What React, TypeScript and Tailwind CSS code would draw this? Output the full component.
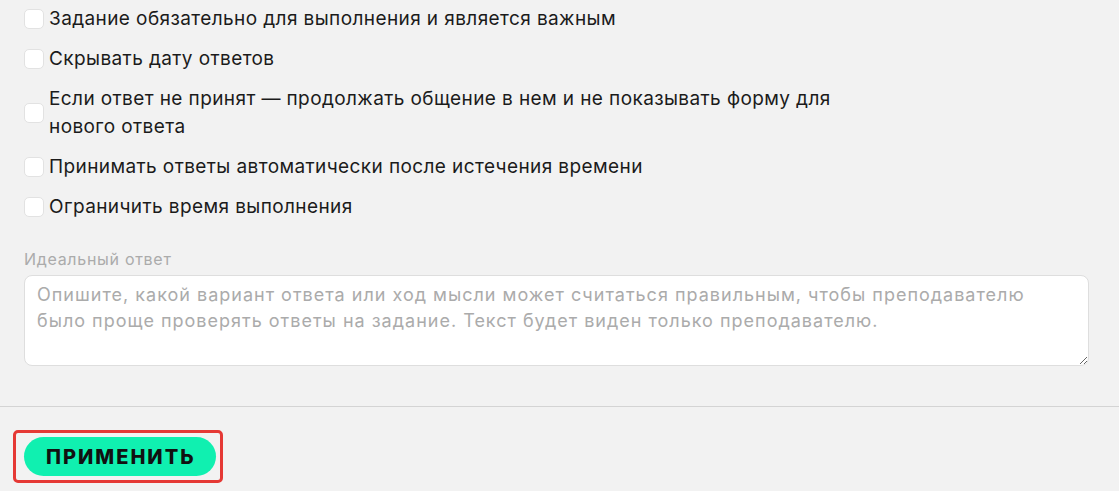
import { useState } from 'react';

type Option = { id: string; label: React.ReactNode };

const options: Option[] = [
  { id: 'required', label: 'Задание обязательно для выполнения и является важным' },
  { id: 'hide-date', label: 'Скрывать дату ответов' },
  {
    id: 'continue',
    label: (
      <>
        Если ответ не принят — продолжать общение в нем и не показывать форму для
        <br />
        нового ответа
      </>
    ),
  },
  { id: 'auto-accept', label: 'Принимать ответы автоматически после истечения времени' },
  { id: 'time-limit', label: 'Ограничить время выполнения' },
];

function CheckRow({ label }: { label: React.ReactNode }) {
  const [checked, setChecked] = useState(false);
  return (
    <label className="flex items-center gap-[5px] cursor-pointer">
      <span
        onClick={() => setChecked(!checked)}
        className={`w-5 h-5 shrink-0 rounded-[5px] border border-[#e2e2e2] ${checked ? 'bg-[#10f0b0]' : 'bg-white'}`}
      />
      <span className="text-[19px] leading-[28px] tracking-[0.4px] text-[#1b1b1b]">{label}</span>
    </label>
  );
}

export default function App() {
  return (
    <div
      className="w-[1119px] h-[491px] bg-[#f2f2f2] overflow-hidden"
      style={{ fontFamily: 'Inter, "Noto Sans", sans-serif' }}
    >
      <div className="px-6">
        <div className="flex flex-col gap-[12px] pt-[5px]">
          {options.map((o) => (
            <CheckRow key={o.id} label={o.label} />
          ))}
        </div>

        <div className="mt-[28px]">
          <div className="text-[16px] leading-[20px] tracking-[0.7px] text-[#ababab] mb-[6px]">Идеальный ответ</div>
          <textarea
            className="block w-[1065px] h-[91px] bg-white border border-[#dedede] rounded-[8px] px-3 py-[6px] text-[18px] leading-[26px] tracking-[1px] text-[#1b1b1b] placeholder:text-[#ababab] outline-none"
            placeholder="Опишите, какой вариант ответа или ход мысли может считаться правильным, чтобы преподавателю было проще проверять ответы на задание. Текст будет виден только преподавателю."
          />
        </div>
      </div>

      <div className="mt-[40px] border-t border-[#d4d4d4]" />

      <div className="pl-[13px] pt-[23px]">
        <div className="inline-flex border-[3px] border-[#e53935] rounded-[5px] pl-2 pr-1 py-1">
          <button className="h-[39px] pl-[22px] pr-[20px] rounded-full bg-[#10f0b0] text-[20px] font-extrabold tracking-[2px] text-[#111]">
            ПРИМЕНИТЬ
          </button>
        </div>
      </div>
    </div>
  );
}
